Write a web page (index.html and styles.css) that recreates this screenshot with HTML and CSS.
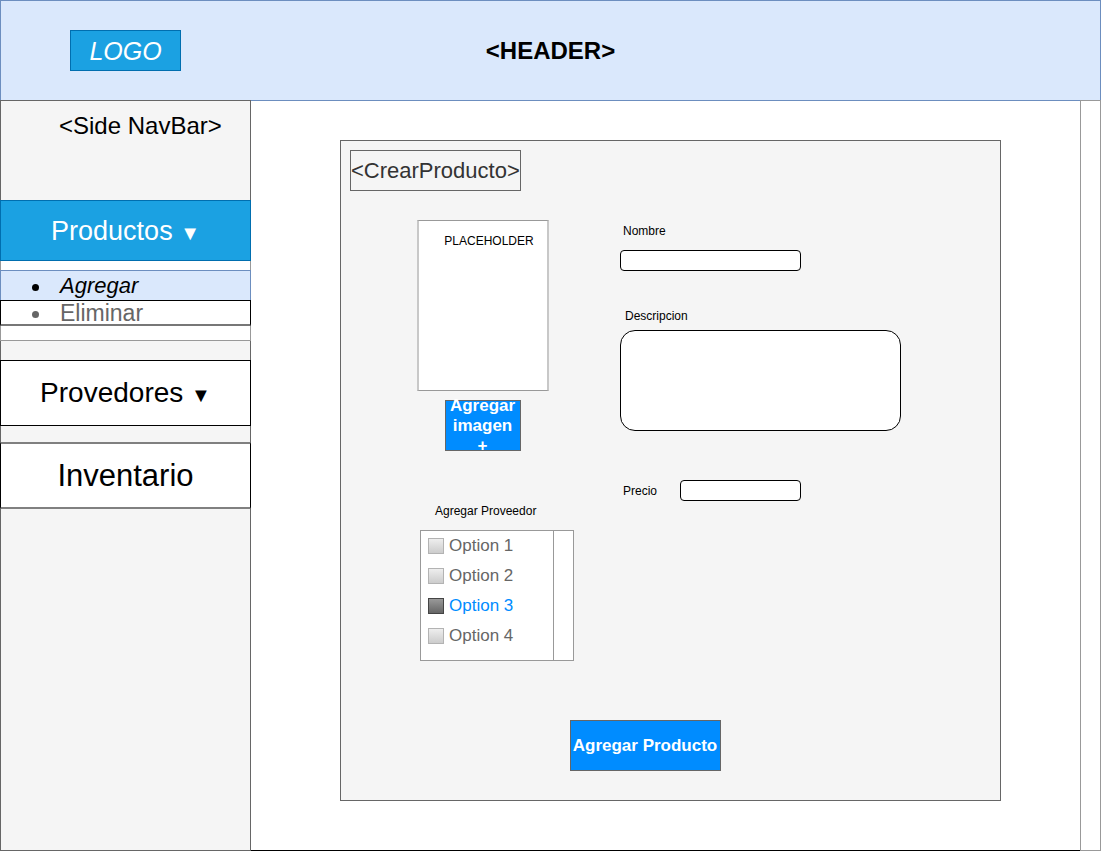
FILE: index.html
```html
<!DOCTYPE html>
<html lang="es">
<head>
<meta charset="utf-8">
<meta name="viewport" content="width=device-width, initial-scale=1">
<title>Crear producto</title>
<link rel="stylesheet" href="styles.css">
</head>
<body>
<header class="header">
  <a class="logo" href="#">LOGO</a>
  <h1 class="header-title">&lt;HEADER&gt;</h1>
</header>
<div class="layout">
  <aside class="sidebar">
    <h2 class="sidebar-title">&lt;Side NavBar&gt;</h2>
    <nav class="nav">
      <button class="nav-item nav-products" type="button" aria-expanded="true">Productos <span class="arrow">▼</span></button>
      <ul class="submenu">
        <li class="submenu-item active"><a href="#">Agregar</a></li>
        <li class="submenu-item"><a href="#">Eliminar</a></li>
      </ul>
      <button class="nav-item nav-providers" type="button" aria-expanded="false">Provedores <span class="arrow">▼</span></button>
      <a class="nav-item nav-inventory" href="#">Inventario</a>
    </nav>
  </aside>
  <main class="main">
    <section class="panel">
      <h2 class="panel-title">&lt;CrearProducto&gt;</h2>
      <form class="form">
        <div class="columns">
          <div class="media-column">
            <div class="placeholder">PLACEHOLDER</div>
            <button class="button image-button" type="button">Agregar imagen +</button>
            <fieldset class="providers">
              <legend class="providers-title">Agregar Proveedor</legend>
              <div class="listbox">
                <div class="options">
                  <label class="option"><input type="checkbox">Option 1</label>
                  <label class="option"><input type="checkbox">Option 2</label>
                  <label class="option"><input type="checkbox" checked>Option 3</label>
                  <label class="option"><input type="checkbox">Option 4</label>
                </div>
                <div class="list-track"></div>
              </div>
            </fieldset>
          </div>
          <div class="fields">
            <div class="field">
              <label class="name-label" for="nombre">Nombre</label>
              <input class="name-input" id="nombre" type="text">
            </div>
            <div class="field description">
              <label for="descripcion">Descripcion</label>
              <textarea id="descripcion"></textarea>
            </div>
            <div class="price">
              <label for="precio">Precio</label>
              <input id="precio" type="text">
            </div>
          </div>
        </div>
        <button class="button submit-button" type="submit">Agregar Producto</button>
      </form>
    </section>
  </main>
  <div class="page-track"></div>
</div>
</body>
</html>
```

FILE: styles.css
```css
* {
  box-sizing: border-box;
}

body {
  display: flex;
  flex-direction: column;
  min-height: 100vh;
  margin: 0;
  padding-bottom: 1px;
  background: #fff;
  color: #000;
  font-family: "Liberation Sans", Arial, sans-serif;
  font-size: 12px;
}

h1,
h2 {
  margin: 0;
}

a {
  color: inherit;
  text-decoration: none;
}

button,
input,
textarea {
  margin: 0;
  font: inherit;
}

button {
  cursor: pointer;
}

/* Header */
.header {
  display: grid;
  grid-template-columns: 1fr auto 1fr;
  align-items: center;
  height: 100px;
  padding-left: 69px;
  padding-right: 69px;
  border: 1px solid #6c8ebf;
  border-bottom: 0;
  background: #dae8fc;
}

.logo {
  justify-self: start;
  width: 111px;
  padding-top: 1px;
  border: 1px solid #006eaf;
  background: #1ba1e2;
  color: #fff;
  font-size: 25px;
  font-style: italic;
  line-height: 38px;
  text-align: center;
}

.header-title {
  font-size: 24px;
  line-height: 28px;
}

.layout {
  display: flex;
  flex: 1;
}

/* Sidebar */
.sidebar {
  flex: none;
  width: 251px;
  border: 1px solid #666;
  background: #f5f5f5;
}

.sidebar-title {
  padding: 11px 0 61px 58px;
  font-size: 24px;
  font-weight: 400;
  line-height: 27px;
}

.nav {
  display: flex;
  flex-direction: column;
  margin: 0 -1px;
}

.nav-item {
  display: block;
  padding: 0;
  border: 1px solid #000;
  background: #fff;
  color: #000;
  text-align: center;
}

.nav-products {
  height: 61px;
  padding-top: 2px;
  border-color: #006eaf;
  background: #1ba1e2;
  color: #fff;
  font-size: 27px;
}

.nav-providers {
  height: 66px;
  margin-top: 19px;
  font-size: 28px;
}

.nav-inventory {
  height: 67px;
  margin-top: 16px;
  border-width: 2px 1px;
  border-color: #808080 #000;
  font-size: 31px;
  line-height: 63px;
}

.arrow {
  font-size: 20px;
}

.submenu {
  margin: 0;
  padding: 9px 0 14px;
  border: 1px solid #999;
  border-top: 0;
  background: #fff;
  list-style: none;
}

.submenu-item {
  display: flex;
  align-items: center;
  gap: 21px;
  height: 26px;
  margin: 0 -1px;
  padding-left: 31px;
  border: 1px solid #000;
  border-bottom: 2px solid #777;
  background: #fff;
  color: #666;
  font-size: 23px;
  line-height: 24px;
}

.submenu-item::before {
  content: "";
  width: 7px;
  height: 7px;
  margin-top: 4px;
  border-radius: 50%;
  background: currentColor;
}

.submenu-item.active {
  height: 30px;
  border-color: #6c8ebf;
  border-bottom: 0;
  background: #dae8fc;
  color: #000;
  font-size: 22px;
  font-style: italic;
}

/* Main area */
.main {
  display: flex;
  flex: 1;
  min-width: 0;
  padding: 39px 79px 49px 89px;
  border-top: 1px solid #6c8ebf;
  border-bottom: 1px solid #000;
}

.page-track {
  flex: none;
  width: 21px;
  border: 1px solid #999;
}

.panel {
  flex: 1;
  padding: 9px;
  border: 1px solid #666;
  background: #f5f5f5;
}

.panel-title {
  width: fit-content;
  border: 1px solid #666;
  color: #333;
  font-size: 22px;
  font-weight: 400;
  line-height: 39px;
}

.form {
  padding: 29px 0 20px 67px;
}

.columns {
  display: grid;
  grid-template-columns: 157px 1fr;
  column-gap: 46px;
}

.placeholder {
  width: 132px;
  height: 171px;
  padding: 12px 0 0 12px;
  border: 1px solid #999;
  border-left: 2px solid #c8c8c8;
  border-right: 2px solid #c8c8c8;
  background: #fff;
  line-height: 16px;
  text-align: center;
}

.button {
  display: flex;
  align-items: center;
  justify-content: center;
  height: 51px;
  padding: 0 1px 0 0;
  border: 1px solid #666;
  background: #008cff;
  color: #fff;
  font-size: 17px;
  font-weight: 700;
  line-height: 20px;
}

.image-button {
  width: 76px;
  margin: 9px 0 0 28px;
}

.providers {
  min-width: 0;
  margin: 52px 0 0 3px;
  padding: 0;
  border: 0;
}

.providers-title {
  padding: 0 0 11px 15px;
  line-height: 16px;
}

.listbox {
  display: grid;
  grid-template-columns: 1fr 19px;
  height: 131px;
  border: 1px solid #999;
  background: #fff;
}

.options {
  border-right: 1px solid #999;
}

.option {
  display: flex;
  align-items: center;
  gap: 5px;
  height: 30px;
  padding-left: 7px;
  color: #666;
  font-size: 17px;
}

.option input {
  appearance: none;
  width: 16px;
  height: 16px;
  border: 1px solid #b3b3b3;
  background: linear-gradient(#eee, #ccc);
}

.option input:checked {
  border-color: #444;
  background: linear-gradient(#999, #666);
}

.option:has(:checked) {
  color: #008cff;
}

.list-track {
  background: #fff;
}

/* Text fields */
.field {
  display: flex;
  flex-direction: column;
  line-height: 16px;
}

.name-label {
  padding-left: 3px;
}

.fields {
  padding-top: 3px;
}

.fields input,
.fields textarea {
  padding: 0 4px;
  border: 1px solid #000;
  background: #fff;
}

.fields input {
  height: 21px;
  border-radius: 4px;
}

.name-input {
  width: 181px;
  margin-top: 11px;
}

.description {
  margin-top: 37px;
}

.description label {
  padding-left: 5px;
}

.description textarea {
  width: 281px;
  max-width: 100%;
  height: 101px;
  margin-top: 6px;
  padding: 8px 12px;
  border-radius: 15px;
  resize: none;
}

.price {
  display: flex;
  align-items: center;
  width: 181px;
  margin-top: 49px;
  padding-left: 3px;
}

.price label {
  flex: 1;
}

.price input {
  width: 121px;
}

.submit-button {
  width: 151px;
  margin: 59px 0 0 153px;
  white-space: nowrap;
}
```
